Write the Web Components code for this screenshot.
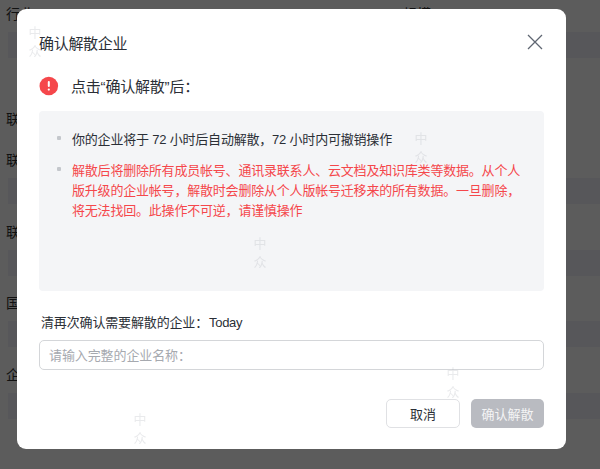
<!DOCTYPE html>
<html>
<head>
<meta charset="utf-8">
<style>
    html, body { margin: 0; height: 100%; overflow: hidden; }
    body { font-family: "Liberation Sans", "Noto Sans CJK SC", sans-serif; background: #5c5c5c; }
</style>
</head>
<body>
<form-backdrop></form-backdrop>
<dissolve-dialog title="确认解散企业" company="Today">
    <notice-item>你的企业将于 72 小时后自动解散，72 小时内可撤销操作</notice-item>
    <notice-item danger>解散后将删除所有成员帐号、通讯录联系人、云文档及知识库类等数据。从个人版升级的企业帐号，解散时会删除从个人版帐号迁移来的所有数据。一旦删除，将无法找回。此操作不可逆，请谨慎操作</notice-item>
</dissolve-dialog>

<script>
const backdropTemplate = document.createElement("template")
backdropTemplate.innerHTML = `
    <style>
        :host {
            display: block;
            height: 469px;
            box-sizing: border-box;
            padding-left: 6px;
            color: #111;
            font-size: 14px;
            overflow: hidden;
        }
        .top {
            display: flex;
            gap: 369px;
            margin-top: 4px;
            line-height: 20px;
        }
        .bar {
            margin: 8px 0 0 2px;
            height: 26px;
            background: #57575a;
        }
        .field { height: 71.5px; line-height: 20px; }
        .heading { margin-top: 51px; height: 41px; line-height: 20px; }
    </style>
    <div class="top"><span>行业</span><span>规模</span></div>
    <div class="bar"></div>
    <div class="heading">联系</div>
    <div class="field">联系<div class="bar"></div></div>
    <div class="field">联系<div class="bar"></div></div>
    <div class="field">国家<div class="bar"></div></div>
    <div class="field">企业<div class="bar"></div></div>
`
class FormBackdrop extends HTMLElement {
    constructor() {
        super()
        this.attachShadow({ mode: "open" })
        this.shadowRoot.appendChild(backdropTemplate.content.cloneNode(true))
    }
}
customElements.define("form-backdrop", FormBackdrop)

const noticeTemplate = document.createElement("template")
noticeTemplate.innerHTML = `
    <style>
        :host {
            display: flex;
            gap: 11px;
            font-size: 13px;
            line-height: 20px;
            letter-spacing: -0.2px;
            color: #2b2f36;
        }
        :host([danger]) { color: #f5474b; }
        .dot {
            flex: none;
            width: 4px;
            height: 4px;
            margin-top: 6px;
            background: #c4c7cc;
            border-radius: 1px;
        }
    </style>
    <span class="dot"></span>
    <div><slot></slot></div>
`
class NoticeItem extends HTMLElement {
    constructor() {
        super()
        this.attachShadow({ mode: "open" })
        this.shadowRoot.appendChild(noticeTemplate.content.cloneNode(true))
    }
}
customElements.define("notice-item", NoticeItem)

const dialogTemplate = document.createElement("template")
dialogTemplate.innerHTML = `
    <style>
        :host {
            position: absolute;
            left: 17px;
            top: 9px;
            width: 549px;
            height: 440px;
            box-sizing: border-box;
            padding: 23px 22px 21px 22px;
            background: #fff;
            border-radius: 9px;
            display: flex;
            flex-direction: column;
            color: #2b2f36;
        }
        header {
            display: flex;
            justify-content: space-between;
            align-items: center;
            height: 20px;
            font-size: 15px;
            letter-spacing: -0.3px;
        }
        .close { display: block; margin-right: 1px; }
        .warn {
            display: flex;
            align-items: center;
            gap: 12px;
            margin-top: 24px;
            height: 20px;
            font-size: 15px;
            letter-spacing: -0.2px;
        }
        .warn span { padding-bottom: 2px; }
        .box {
            margin-top: 15px;
            height: 180px;
            box-sizing: border-box;
            padding: 19px 18px 0 18px;
            background: #f4f5f7;
            border-radius: 4px;
            display: flex;
            flex-direction: column;
            gap: 11px;
        }
        .confirm {
            margin: 22px 0 0 2px;
            height: 20px;
            line-height: 20px;
            font-size: 13px;
            letter-spacing: -0.15px;
        }
        .confirm b { font-weight: normal; margin-left: 1px; letter-spacing: -0.3px; }
        input {
            display: block;
            margin-top: 7px;
            height: 30px;
            width: 100%;
            box-sizing: border-box;
            padding: 0 9px;
            border: 1px solid #d4d6d9;
            border-radius: 5px;
            outline: none;
            font: inherit;
            font-size: 13px;
            letter-spacing: -0.1px;
        }
        input::placeholder { color: #a6a9af; opacity: 1; }
        footer {
            margin-top: auto;
            display: flex;
            justify-content: flex-end;
            gap: 11px;
        }
        button {
            width: 74px;
            height: 29px;
            padding: 0;
            font: inherit;
            font-size: 13px;
            border-radius: 5px;
            border: 1px solid #e0e1e4;
            background: #fff;
            color: #2b2f36;
        }
        button.primary {
            width: 73px;
            border: 0;
            background: #b9bbc1;
            color: #f4f4f5;
        }
        .mark {
            position: absolute;
            width: 16px;
            font-size: 13px;
            line-height: 19px;
            text-align: center;
            color: rgba(175, 178, 185, 0.28);
            filter: blur(0.6px);
            pointer-events: none;
        }
    </style>
    <header>
        <span id="title"></span>
        <svg class="close" width="16" height="16" viewBox="0 0 16 16" fill="none" stroke="#5f6672" stroke-width="1.3">
            <path d="M1 1 L15 15 M15 1 L1 15"/>
        </svg>
    </header>
    <div class="warn">
        <svg width="20" height="20" viewBox="0 0 20 20">
            <circle cx="9.8" cy="10" r="9.3" fill="#f5474b"/>
            <rect x="8.8" y="5" width="2" height="6" rx="1" fill="#fff"/>
            <circle cx="9.8" cy="13.6" r="1.1" fill="#fff"/>
        </svg>
        <span>点击“确认解散”后：</span>
    </div>
    <div class="box"><slot></slot></div>
    <div class="confirm">清再次确认需要解散的企业：<b id="company"></b></div>
    <input placeholder="请输入完整的企业名称：">
    <footer>
        <button>取消</button>
        <button class="primary">确认解散</button>
    </footer>
    <span class="mark" style="left: 10px; top: 14px">中<br>众</span>
    <span class="mark" style="left: 396px; top: 120px">中<br>众</span>
    <span class="mark" style="left: 235px; top: 225px">中<br>众</span>
    <span class="mark" style="left: 428px; top: 355px">中<br>众</span>
    <span class="mark" style="left: 115px; top: 401px">中<br>众</span>
`
class DissolveDialog extends HTMLElement {
    constructor() {
        super()
        this.attachShadow({ mode: "open" })
        this.shadowRoot.appendChild(dialogTemplate.content.cloneNode(true))
    }

    connectedCallback() {
        this.shadowRoot.getElementById("title").textContent = this.getAttribute("title")
        this.shadowRoot.getElementById("company").textContent = this.getAttribute("company")
    }
}
customElements.define("dissolve-dialog", DissolveDialog)
</script>
</body>
</html>
